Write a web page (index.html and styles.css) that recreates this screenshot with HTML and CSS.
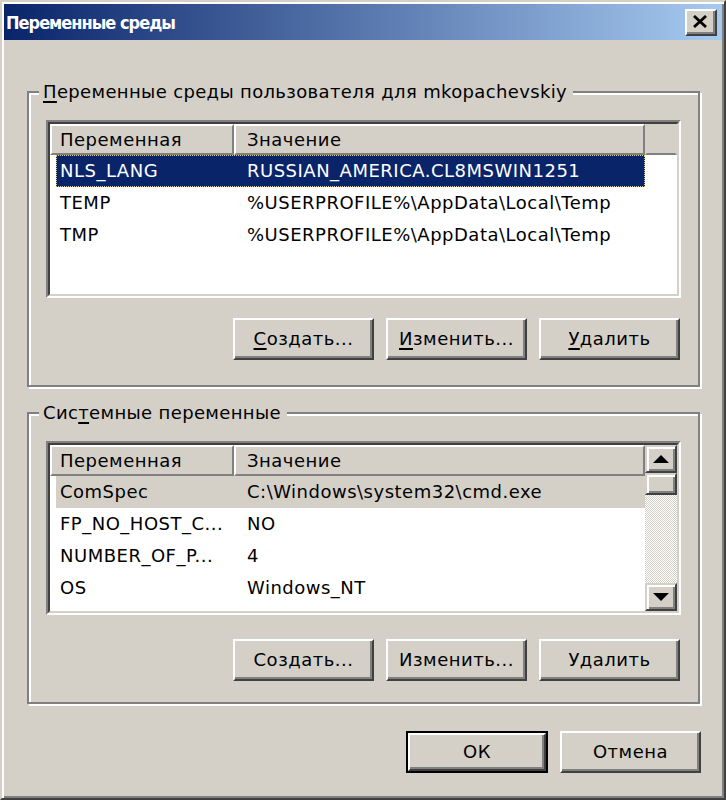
FILE: index.html
```html
<!DOCTYPE html>
<html lang="ru">
<head>
<meta charset="utf-8">
<title>Переменные среды</title>
<link rel="stylesheet" href="styles.css">
</head>
<body>
<div class="window">
  <div class="titlebar">
    <span class="title">Переменные среды</span>
    <div class="close">
      <svg width="16" height="13" viewBox="0 0 16 13"><path d="M2 1 L14 12 M14 1 L2 12" stroke="#000" stroke-width="2.8" fill="none"/></svg>
    </div>
  </div>
  <div class="content">
    <fieldset class="group">
      <legend><u>П</u>еременные среды пользователя для mkopachevskiy</legend>
      <div class="list list-user">
        <div class="list-in">
          <div class="header">
            <div class="hcell hc1">Переменная</div>
            <div class="hcell hc2">Значение</div>
            <div class="hcell hfill"></div>
          </div>
          <div class="rows">
            <div class="row selected"><span class="c1">NLS_LANG</span><span class="c2">RUSSIAN_AMERICA.CL8MSWIN1251</span></div>
            <div class="row"><span class="c1">TEMP</span><span class="c2">%USERPROFILE%\AppData\Local\Temp</span></div>
            <div class="row"><span class="c1">TMP</span><span class="c2">%USERPROFILE%\AppData\Local\Temp</span></div>
          </div>
        </div>
      </div>
      <div class="btnrow">
        <div class="btn"><u>С</u>оздать...</div>
        <div class="btn"><u>И</u>зменить...</div>
        <div class="btn"><u>У</u>далить</div>
      </div>
    </fieldset>

    <fieldset class="group group-sys">
      <legend>Сис<u>т</u>емные переменные</legend>
      <div class="list list-sys">
        <div class="list-in sys-in">
          <div class="sys-main">
            <div class="header">
              <div class="hcell hc1">Переменная</div>
              <div class="hcell hc2">Значение</div>
            </div>
            <div class="rows">
              <div class="row inactive"><span class="c1">ComSpec</span><span class="c2">C:\Windows\system32\cmd.exe</span></div>
              <div class="row"><span class="c1">FP_NO_HOST_C...</span><span class="c2">NO</span></div>
              <div class="row"><span class="c1">NUMBER_OF_P...</span><span class="c2">4</span></div>
              <div class="row"><span class="c1">OS</span><span class="c2">Windows_NT</span></div>
              <div class="row"><span class="c1">Path</span><span class="c2">C:\Windows\system32;C:\Windows;C:\Windows\System32\Wbem</span></div>
            </div>
          </div>
          <div class="scrollbar">
            <div class="sbtn"><svg width="16" height="8" viewBox="0 0 16 8"><polygon points="8,0 16,8 0,8" fill="#000"/></svg></div>
            <div class="thumb"></div>
            <div class="track"></div>
            <div class="sbtn"><svg width="16" height="8" viewBox="0 0 16 8"><polygon points="0,0 16,0 8,8" fill="#000"/></svg></div>
          </div>
        </div>
      </div>
      <div class="btnrow">
        <div class="btn">Создать...</div>
        <div class="btn">Изменить...</div>
        <div class="btn">Удалить</div>
      </div>
    </fieldset>

    <div class="footer">
      <div class="btn default"><span class="btn-face">ОК</span></div>
      <div class="btn">Отмена</div>
    </div>
  </div>
</div>
</body>
</html>
```

FILE: styles.css
```css
* { box-sizing: border-box; }
html, body { margin: 0; padding: 0; }
body {
  width: 726px;
  height: 800px;
  background: #d4d0c8;
  font-family: "DejaVu Sans", "Liberation Sans", sans-serif;
  font-size: 18px;
  letter-spacing: 0.5px;
  color: #000;
  overflow: hidden;
}
u { text-decoration: underline; text-underline-offset: 3px; text-decoration-thickness: 2px; }

.window {
  width: 726px;
  height: 800px;
  background: #d4d0c8;
  border: 2px solid;
  border-color: #d4d0c8 #404040 #404040 #d4d0c8;
  box-shadow: inset 2px 2px 0 #fff, inset -2px -2px 0 #808080;
  padding: 2px;
  display: flex;
  flex-direction: column;
}

.titlebar {
  height: 36px;
  background: linear-gradient(to right, #0a246a 0%, #a6caf0 100%);
  display: flex;
  align-items: center;
  justify-content: space-between;
  padding: 0 5px 0 2px;
}
.title {
  color: #fff;
  font-family: "DejaVu Sans Condensed", "DejaVu Sans", sans-serif;
  font-weight: bold;
  font-size: 18px;
  letter-spacing: -1px;
  padding-top: 1px;
}
.close {
  width: 32px;
  height: 27px;
  background: #d4d0c8;
  border: 2px solid;
  border-color: #fff #404040 #404040 #fff;
  box-shadow: inset -2px -2px 0 #808080;
  display: flex;
  align-items: center;
  justify-content: center;
  padding: 0 2px 2px 0;
}

.content {
  padding: 0 22px 0 23px;
  display: flex;
  flex-direction: column;
}

.group {
  margin: 41px 0 0 0;
  padding: 17px 17px 25px 17px;
  border: 2px solid #808080;
  box-shadow: inset 2px 2px 0 #fff, 2px 2px 0 #fff;
  min-width: 0;
}
.group-sys { margin-top: 15px; padding-bottom: 21px; }
.group legend {
  margin-left: -7px;
  padding: 0 6px 0 4px;
  line-height: 22px;
  background: #d4d0c8;
  letter-spacing: 0.35px;
}

.list {
  border: 2px solid;
  border-color: #808080 #fff #fff #808080;
  background: #fff;
}
.list-in {
  border: 2px solid;
  border-color: #404040 #d4d0c8 #d4d0c8 #404040;
  background: #fff;
  height: 100%;
  display: flex;
  flex-direction: column;
}
.list-user { height: 178px; }
.list-sys { height: 174px; }

.header {
  display: flex;
  height: 31px;
  flex: none;
}
.hcell {
  background: #d4d0c8;
  border: 2px solid;
  border-color: #fff #808080 #808080 #fff;
  line-height: 27px;
  padding-left: 8px;
  white-space: nowrap;
}
.hc1 { width: 184px; }
.hc2 { width: 411px; padding-left: 11px; }
.hfill { flex: 1; border-color: #d4d0c8 #d4d0c8 #808080 #d4d0c8; }

.rows {
  flex: 1;
  overflow: hidden;
  background: #fff;
}
.row {
  display: flex;
  height: 32px;
  line-height: 32px;
  width: 589px;
  margin-left: 6px;
  white-space: nowrap;
}
.row .c1 { width: 178px; flex: none; padding-left: 4px; overflow: hidden; }
.row .c2 { padding-left: 13px; }
.row.selected {
  background: #0a246a;
  color: #fff;
  outline: 1px dotted #d8cf8a;
  outline-offset: -1px;
}
.row.inactive { background: #d4d0c8; }

.sys-in { flex-direction: row; }
.sys-main {
  flex: 1;
  display: flex;
  flex-direction: column;
  min-width: 0;
}
.sys-main .hc2 { flex: 1; width: auto; }
.scrollbar {
  width: 32px;
  display: flex;
  flex-direction: column;
}
.sbtn, .thumb {
  background: #d4d0c8;
  border: 2px solid;
  border-color: #d4d0c8 #404040 #404040 #d4d0c8;
  box-shadow: inset 2px 2px 0 #fff, inset -2px -2px 0 #808080;
}
.sbtn {
  height: 28px;
  display: flex;
  align-items: center;
  justify-content: center;
}
.thumb { height: 22px; }
.track {
  flex: 1;
  background: repeating-conic-gradient(#ffffff 0 25%, #d4d0c8 0 50%) 0 0 / 2px 2px;
}

.btnrow {
  display: flex;
  justify-content: flex-end;
  gap: 12px;
  margin-top: 20px;
  padding-right: 1px;
}
.group-sys .btnrow { margin-top: 24px; }

.btn {
  width: 141px;
  height: 42px;
  background: #d4d0c8;
  border: 2px solid;
  border-color: #fff #404040 #404040 #fff;
  box-shadow: inset -2px -2px 0 #808080;
  display: flex;
  align-items: center;
  justify-content: center;
  padding-bottom: 2px;
  white-space: nowrap;
}
.btn.default {
  width: 142px;
  border: 2px solid #000;
  box-shadow: none;
  padding: 0;
}
.btn-face {
  flex: 1;
  align-self: stretch;
  display: flex;
  align-items: center;
  justify-content: center;
  border: 2px solid;
  border-color: #fff #404040 #404040 #fff;
  box-shadow: inset -2px -2px 0 #808080;
  padding-bottom: 2px;
}

.footer {
  display: flex;
  justify-content: flex-end;
  gap: 12px;
  margin-top: 27px;
  margin-right: -1px;
}
```
